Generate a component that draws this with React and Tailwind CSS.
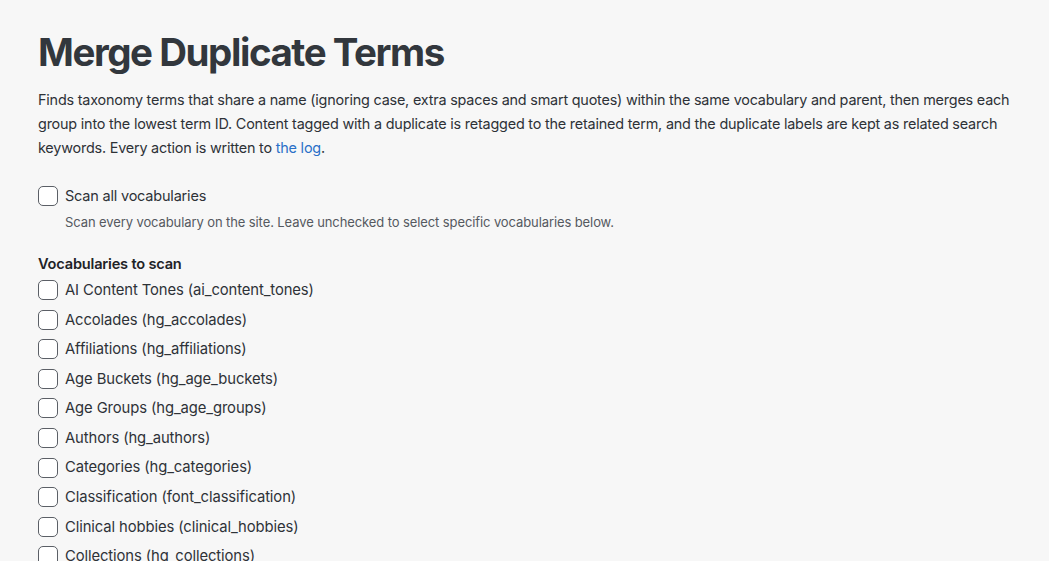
import React from "react";

const vocabs = [
  "AI Content Tones (ai_content_tones)",
  "Accolades (hg_accolades)",
  "Affiliations (hg_affiliations)",
  "Age Buckets (hg_age_buckets)",
  "Age Groups (hg_age_groups)",
  "Authors (hg_authors)",
  "Categories (hg_categories)",
  "Classification (font_classification)",
  "Clinical hobbies (clinical_hobbies)",
  "Collections (hg_collections)",
];

function Box() {
  return (
    <span className="block w-[20px] h-[20px] shrink-0 rounded-[5px] border border-[#5b5f66] bg-white" />
  );
}

export default function App() {
  return (
    <div
      className="bg-[#f7f7f7] text-[#2e3237] overflow-hidden h-[561px]"
      style={{ fontFamily: "Inter, 'Noto Sans', sans-serif" }}
    >
      <div className="pl-[38px] pr-[30px] pt-[28px]">
        <h1 className="text-[38.5px] leading-[48px] font-bold text-[#32373d] tracking-[-1.45px]">
          Merge Duplicate Terms
        </h1>
        <p className="mt-[12px] text-[14.4px] leading-[24px] tracking-[-0.2px] text-[#2e3237]">
          Finds taxonomy terms that share a name (ignoring case, extra spaces and smart quotes) within the same vocabulary and parent, then merges each group into the lowest term ID. Content tagged with a duplicate is retagged to the retained term, and the duplicate labels are kept as related search keywords. Every action is written to{" "}
          <a className="text-[#2a70c8]">the log</a>.
        </p>

        <div className="mt-[25px]">
          <label className="flex items-center gap-[7px] h-[22px]">
            <Box />
            <span className="text-[14.5px] tracking-[-0.2px]">Scan all vocabularies</span>
          </label>
          <div className="pl-[27px] mt-[6px] text-[13px] leading-[18px] tracking-[-0.1px] text-[#55595f]">
            Scan every vocabulary on the site. Leave unchecked to select specific vocabularies below.
          </div>
        </div>

        <div className="mt-[23px]">
          <div className="text-[14.6px] leading-[20px] font-semibold text-[#1f2327] tracking-[-0.2px]">
            Vocabularies to scan
          </div>
          <div className="mt-[6px] flex flex-col gap-[9.6px]">
            {vocabs.map((v) => (
              <label key={v} className="flex items-center gap-[7px] h-[20px]">
                <Box />
                <span className="text-[14.8px] tracking-[-0.1px]">{v}</span>
              </label>
            ))}
          </div>
        </div>
      </div>
    </div>
  );
}
